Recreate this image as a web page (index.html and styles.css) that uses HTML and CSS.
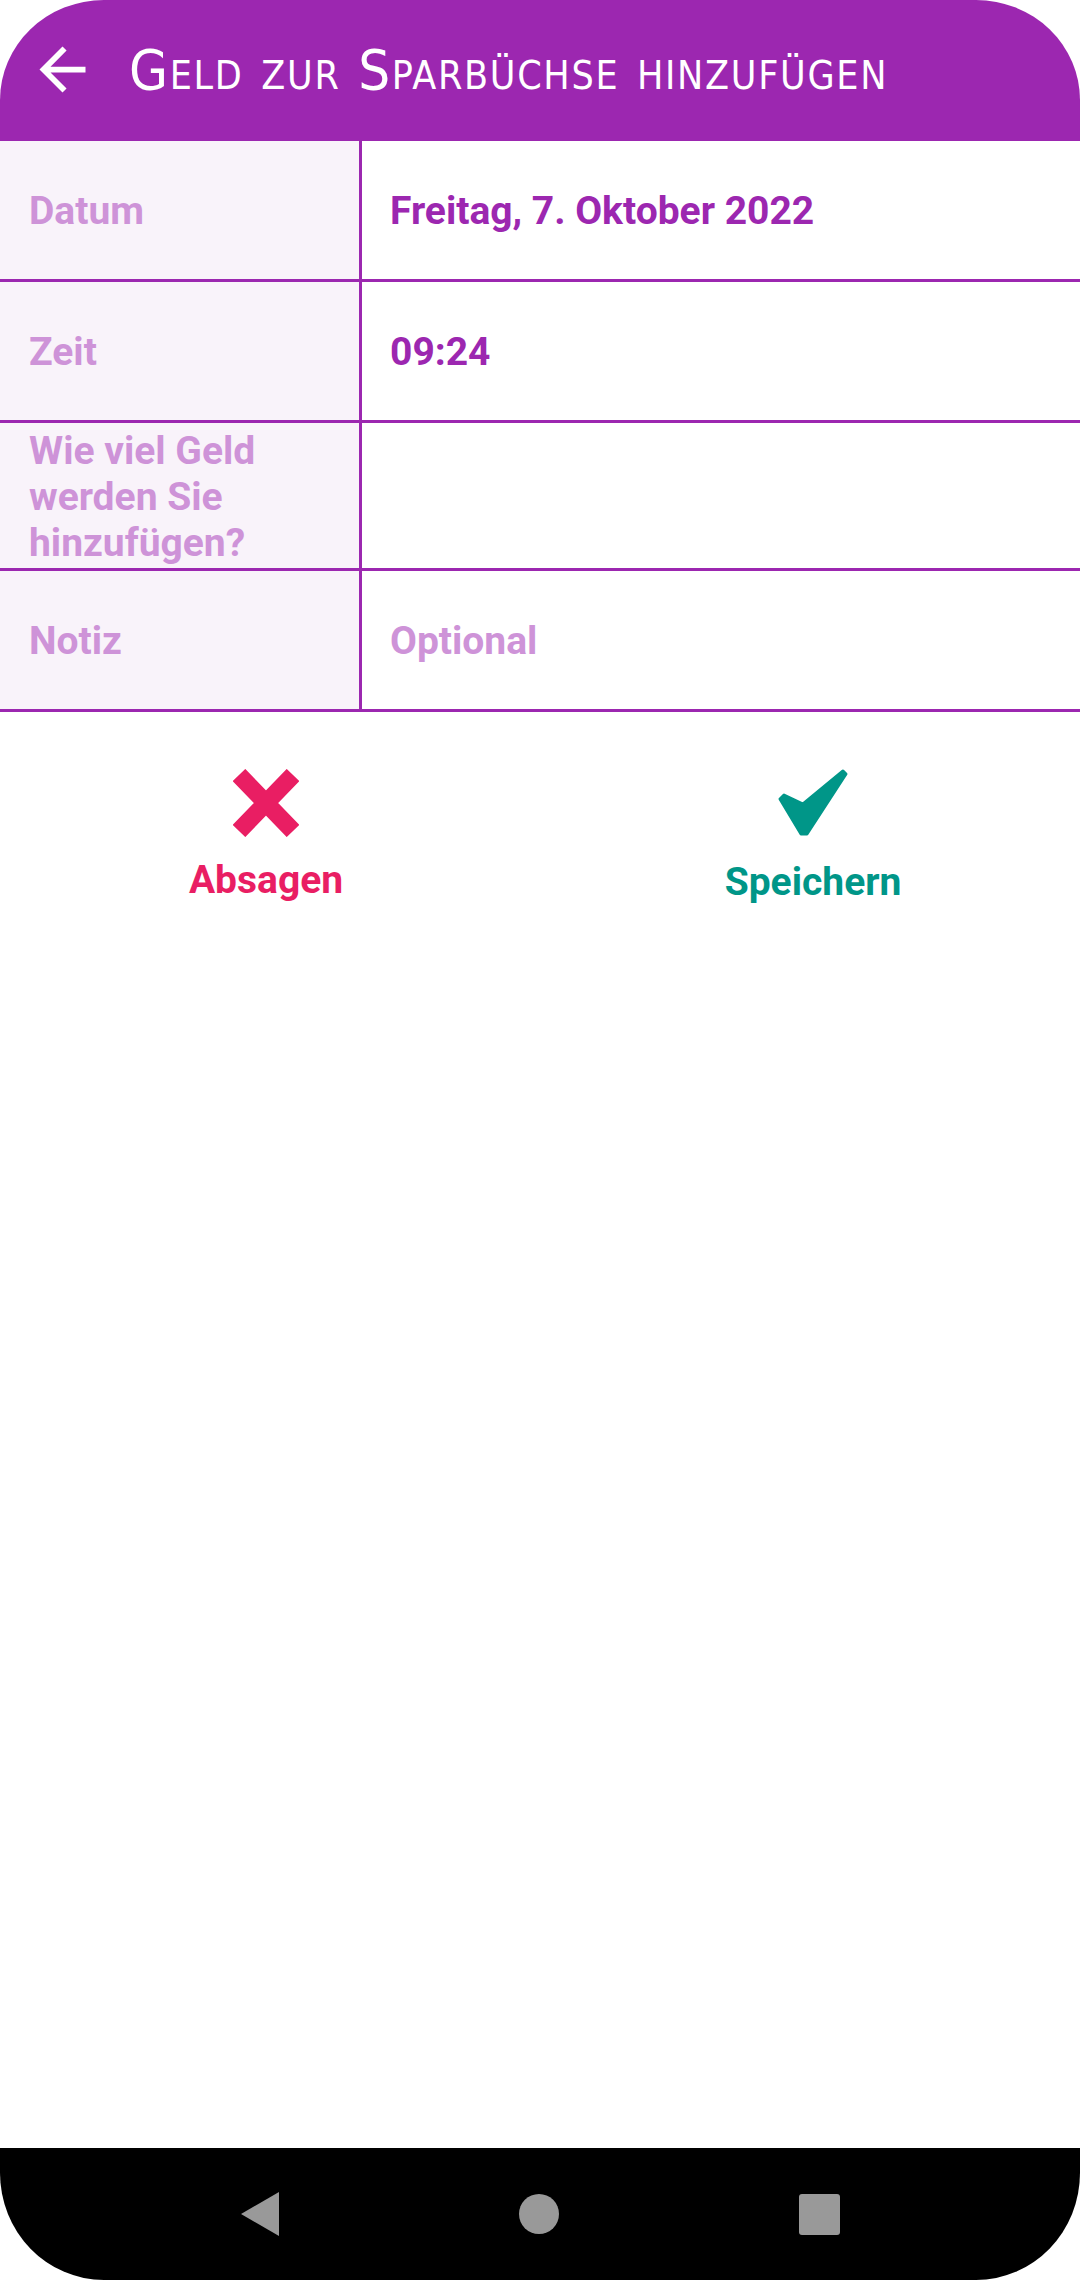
FILE: index.html
```html
<!DOCTYPE html>
<html lang="de">
<head>
<meta charset="utf-8">
<title>Geld zur Sparbüchse hinzufügen</title>
<link rel="stylesheet" href="styles.css">
</head>
<body>
<div class="screen">
  <header class="appbar">
    <svg class="back" viewBox="0 0 24 24" width="69" height="69"><path fill="#fff" d="M20 11H7.83l5.59-5.59L12 4l-8 8 8 8 1.41-1.41L7.83 13H20v-2z"/></svg>
    <h1 class="title">Geld zur Sparbüchse hinzufügen</h1>
  </header>

  <div class="form">
    <div class="row">
      <div class="label">Datum</div>
      <div class="value">Freitag, 7. Oktober 2022</div>
    </div>
    <div class="row">
      <div class="label">Zeit</div>
      <div class="value">09:24</div>
    </div>
    <div class="row row-tall">
      <div class="label">Wie viel Geld werden Sie hinzufügen?</div>
      <div class="value"></div>
    </div>
    <div class="row">
      <div class="label">Notiz</div>
      <div class="value placeholder">Optional</div>
    </div>
  </div>

  <div class="actions">
    <div class="action cancel">
      <svg class="icon" width="66" height="68" viewBox="0 0 66 68"><path d="M6 6L60 62M60 6L6 62" stroke="#E91E63" stroke-width="17.5" fill="none"/></svg>
      <span class="action-label">Absagen</span>
    </div>
    <div class="action save">
      <svg class="icon" width="75" height="74" viewBox="0 0 75 74"><polygon fill="#009688" stroke="#009688" stroke-width="3" stroke-linejoin="round" points="4,33 8,29 27,38 67,5 70,8 31,68 25,68"/></svg>
      <span class="action-label">Speichern</span>
    </div>
  </div>

  <div class="spacer"></div>

  <nav class="navbar">
    <span class="nav-back"></span>
    <span class="nav-home"></span>
    <span class="nav-recent"></span>
  </nav>
</div>
</body>
</html>
```

FILE: styles.css
```css
html, body {
  margin: 0;
  padding: 0;
  background: #ffffff;
}

.screen {
  width: 1080px;
  height: 2280px;
  display: flex;
  flex-direction: column;
  font-family: Roboto, "Noto Sans", sans-serif;
  overflow: hidden;
}

.appbar {
  height: 141px;
  flex: 0 0 141px;
  background: #9C27B0;
  border-radius: 104px 104px 0 0 / 100px 100px 0 0;
  display: flex;
  align-items: center;
  box-sizing: border-box;
  padding-left: 28px;
  padding-bottom: 3px;
}

.back {
  display: block;
  flex: 0 0 69px;
}

.title {
  margin: 0 0 0 32px;
  color: #ffffff;
  font-family: "Liberation Sans Narrow", "DejaVu Sans Condensed", "Liberation Sans", sans-serif;
  font-weight: normal;
  font-variant: small-caps;
  font-size: 56px;
  letter-spacing: 1.7px;
  white-space: nowrap;
}

.form {
  display: flex;
  flex-direction: column;
}

.row {
  display: flex;
  height: 141px;
  box-sizing: border-box;
  border-bottom: 3px solid #9C27B0;
}

.row-tall {
  height: 148px;
}

.label {
  box-sizing: border-box;
  background: #F9F3FA;
  border-right: 3px solid #9C27B0;
  flex: 0 0 362px;
  padding: 2px 20px 0 29px;
  display: flex;
  align-items: center;
  color: #CE93D8;
  font-size: 39px;
  font-weight: bold;
  line-height: 46px;
}

.value {
  flex: 1;
  display: flex;
  align-items: center;
  padding: 2px 0 0 28px;
  color: #9C27B0;
  font-size: 39px;
  font-weight: bold;
}

.placeholder {
  color: #CE93D8;
}

.actions {
  display: grid;
  grid-template-columns: 1fr 1fr;
  padding-top: 57px;
}

.action {
  display: flex;
  flex-direction: column;
  align-items: center;
}

.cancel {
  padding-right: 8px;
}

.save {
  padding-left: 6px;
}

.icon {
  display: block;
}

.cancel .icon {
  margin-bottom: 20px;
}

.save .icon {
  margin-top: -3px;
  margin-bottom: 19px;
}

.action-label {
  font-size: 39px;
  font-weight: bold;
}

.cancel .action-label {
  color: #E91E63;
}

.save .action-label {
  color: #009688;
}

.spacer {
  flex: 1;
}

.navbar {
  flex: 0 0 132px;
  background: #000000;
  border-radius: 0 0 104px 104px / 0 0 107px 107px;
  display: flex;
  align-items: center;
  justify-content: center;
  gap: 240px;
}

.nav-back {
  width: 0;
  height: 0;
  border-top: 22px solid transparent;
  border-bottom: 22px solid transparent;
  border-right: 38px solid #999999;
}

.nav-home {
  width: 40px;
  height: 40px;
  border-radius: 50%;
  background: #999999;
}

.nav-recent {
  width: 41px;
  height: 41px;
  border-radius: 3px;
  background: #999999;
}
```
